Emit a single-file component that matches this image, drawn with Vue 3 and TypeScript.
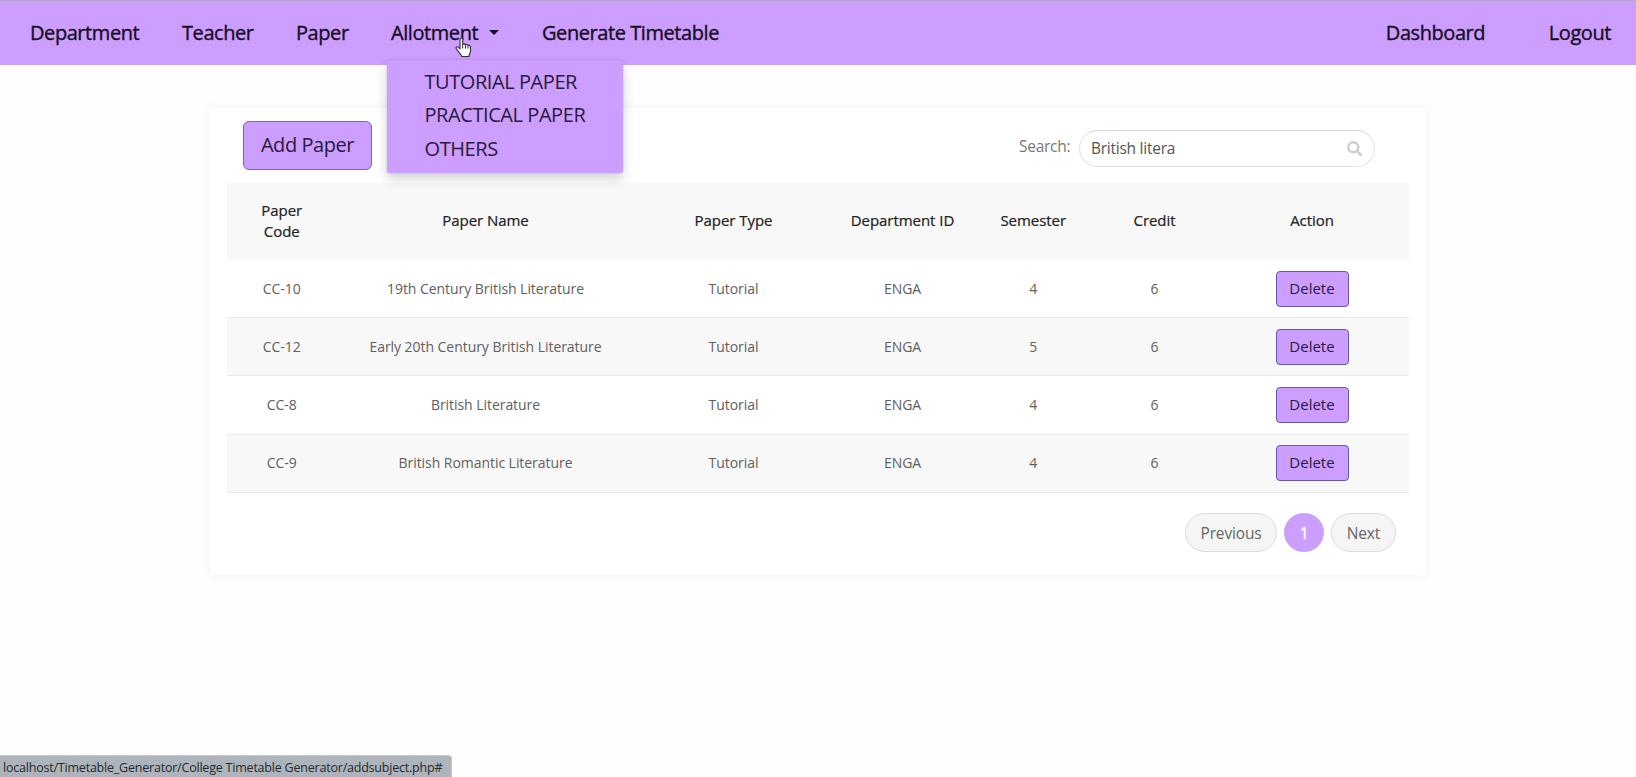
<script setup lang="ts">
import { ref } from 'vue'

interface Paper {
  code: string
  name: string
  type: string
  department: string
  semester: number
  credit: number
}

const query = ref('British litera')
const menu: string[] = ['TUTORIAL PAPER', 'PRACTICAL PAPER', 'OTHERS']
const columns: string[] = ['Paper Code', 'Paper Name', 'Paper Type', 'Department ID', 'Semester', 'Credit', 'Action']
const papers: Paper[] = [
  { code: 'CC-10', name: '19th Century British Literature', type: 'Tutorial', department: 'ENGA', semester: 4, credit: 6 },
  { code: 'CC-12', name: 'Early 20th Century British Literature', type: 'Tutorial', department: 'ENGA', semester: 5, credit: 6 },
  { code: 'CC-8', name: 'British Literature', type: 'Tutorial', department: 'ENGA', semester: 4, credit: 6 },
  { code: 'CC-9', name: 'British Romantic Literature', type: 'Tutorial', department: 'ENGA', semester: 4, credit: 6 },
]
</script>

<template>
  <div class="page">
    <nav class="navbar">
      <div class="links">
        <a class="link department">Department</a>
        <a class="link teacher">Teacher</a>
        <a class="link paper">Paper</a>
        <div class="dropdown">
          <a class="link allotment">Allotment<span class="caret"></span></a>
          <svg class="pointer" width="17" height="22" viewBox="0 0 17 22">
            <path
              d="M5 11.8V2.4C5 .6 7.7.6 7.7 2.4v5.2c.4-1.2 2.5-1 2.7.5.5-1.1 2.4-.9 2.6.6.6-.8 2.5-.5 2.5 1.2v4.3c0 2-1.4 3-1.6 5.3H6.6c-.3-2-2.4-3.3-3.3-5.2L1.1 11.6c-.7-1.6 1.2-2.5 2.3-1.3z"
              fill="#fff" stroke="#332b3c" stroke-width="1.1" stroke-linejoin="round" />
            <path d="M7.7 7.5v4M10.4 8.3v3.2M13 9v2.7" stroke="#332b3c" stroke-width="1" fill="none" />
          </svg>
          <div class="menu">
            <a v-for="item in menu" :key="item">{{ item }}</a>
          </div>
        </div>
        <a class="link generate">Generate Timetable</a>
      </div>
      <div class="account">
        <a class="link dashboard">Dashboard</a>
        <a class="link logout">Logout</a>
      </div>
    </nav>

    <main class="card">
      <div class="toolbar">
        <button class="add" type="button">Add Paper</button>
        <div class="search">
          <label for="search">Search:</label>
          <div class="field">
            <input id="search" v-model="query" type="text" />
            <svg width="15" height="15" viewBox="0 0 15 15" fill="none" stroke="#cdcdcd">
              <circle cx="6.3" cy="6.3" r="5" stroke-width="2.4" />
              <path d="M10 10l3.800 3.800" stroke-width="2.6" stroke-linecap="round" />
            </svg>
          </div>
        </div>
      </div>

      <div class="table">
        <div class="row head">
          <span v-for="column in columns" :key="column" :class="{ narrow: column === 'Paper Code' }">{{ column }}</span>
        </div>
        <div v-for="paper in papers" :key="paper.code" class="row">
          <span>{{ paper.code }}</span>
          <span>{{ paper.name }}</span>
          <span>{{ paper.type }}</span>
          <span>{{ paper.department }}</span>
          <span>{{ paper.semester }}</span>
          <span>{{ paper.credit }}</span>
          <span><button class="delete" type="button">Delete</button></span>
        </div>
      </div>

      <div class="pagination">
        <button class="previous" type="button">Previous</button>
        <button class="current" type="button">1</button>
        <button class="next" type="button">Next</button>
      </div>
    </main>

    <div class="status">localhost/Timetable_Generator/College Timetable Generator/addsubject.php#</div>
  </div>
</template>

<style>
body {
  margin: 0;
  background: #fff;
}
</style>

<style scoped>
.page {
  position: relative;
  height: 777px;
  overflow: hidden;
  display: flex;
  flex-direction: column;
  background: #fefefe;
  font-family: 'Open Sans', 'Noto Sans', sans-serif;
}
.page * {
  box-sizing: border-box;
}
button,
input {
  font-family: inherit;
  padding: 0;
  margin: 0;
}
.navbar {
  flex: none;
  height: 65px;
  display: flex;
  justify-content: space-between;
  align-items: center;
  padding: 0 25px 0 30px;
  background: #cc9eff;
  border-top: 1px solid #b7a3d0;
  border-bottom: 1px solid #c9a4f2;
}
.links,
.account {
  display: flex;
  align-items: center;
}
.link {
  display: flex;
  align-items: center;
  font-size: 20px;
  letter-spacing: -0.43px;
  -webkit-text-stroke: 0.35px #160c20;
  line-height: 28px;
  color: #160c20;
  white-space: nowrap;
}
.department { width: 152px; }
.teacher { width: 114px; }
.paper { width: 95px; }
.allotment { width: 151px; }
.dashboard { width: 163px; }
.caret {
  margin-left: 11px;
  border: 5px solid transparent;
  border-top-color: #160c20;
  border-bottom: 0;
}
.dropdown {
  position: relative;
}
.pointer {
  position: absolute;
  left: 64px;
  top: 18px;
  z-index: 3;
}
.menu {
  position: absolute;
  left: -4px;
  top: 41px;
  z-index: 2;
  width: 236px;
  height: 113px;
  padding: 5px 0 0 37.5px;
  background: #cc9eff;
  border-radius: 3px;
  box-shadow: 0 6px 12px rgba(0, 0, 0, 0.18), 0 0 2px rgba(0, 0, 0, 0.2);
}
.menu a {
  display: block;
  height: 33.7px;
  line-height: 33.7px;
  font-size: 20px;
  letter-spacing: -0.43px;
  color: #2a1a3a;
  white-space: nowrap;
}
.card {
  flex: none;
  width: 1216px;
  height: 467px;
  margin: 43px 0 0 210px;
  padding: 13px 17px 0;
  background: #fff;
  box-shadow: 0 0 10px rgba(0, 0, 0, 0.06);
}
.toolbar {
  height: 62px;
  display: flex;
  justify-content: space-between;
  align-items: flex-start;
  padding: 0 34px 0 16px;
}
.add {
  width: 129px;
  height: 49px;
  padding-bottom: 2px;
  border: 1px solid #7468b2;
  border-radius: 6px;
  background: #cc9eff;
  color: #2a1a3a;
  font-size: 20px;
  letter-spacing: -0.43px;
}
.search {
  display: flex;
  margin-top: 9px;
}
.search label {
  width: 60px;
  margin-top: 5px;
  line-height: 22px;
  font-size: 15.5px;
  letter-spacing: -0.28px;
  color: #777;
}
.field {
  display: flex;
  align-items: center;
  width: 296px;
  height: 37px;
  padding: 0 12px 1px 11px;
  border: 1px solid #e2e2e2;
  border-top-color: #d8d8d8;
  border-radius: 19px;
  background: #fff;
}
.field input {
  flex: 1;
  min-width: 0;
  border: 0;
  outline: 0;
  background: none;
  font-size: 15.5px;
  letter-spacing: -0.25px;
  color: #555;
}
.row {
  display: grid;
  grid-template-columns: 109.5px 298px 198px 140px 121.5px 121px 194px;
  align-items: center;
  height: 58.2px;
  border-bottom: 1px solid #ebebeb;
  font-size: 14px;
  letter-spacing: -0.05px;
  color: #606060;
  text-align: center;
}
.row span {
  white-space: nowrap;
}
.row:not(.head) > span {
  padding-bottom: 1px;
}
.row:nth-child(odd) {
  background: #f8f8f8;
}
.head {
  height: 77px;
  padding-bottom: 2px;
  border-bottom: 0;
  font-size: 15px;
  letter-spacing: -0.05px;
  -webkit-text-stroke: 0.22px #222;
  line-height: 21px;
  color: #222;
}
.head .narrow {
  white-space: normal;
  padding: 0 25px;
}
.delete {
  display: block;
  width: 73px;
  height: 36px;
  margin: 1px auto 0;
  padding-bottom: 2px;
  border: 1px solid #6458a8;
  border-radius: 4px;
  background: #cc9eff;
  color: #2a1a3a;
  font-size: 15px;
}
.pagination {
  display: flex;
  justify-content: flex-end;
  gap: 7px;
  padding: 20px 13px 0 0;
}
.pagination button {
  height: 39px;
  padding-top: 1px;
  border: 1px solid #dcdcdc;
  border-radius: 20px;
  background: #f5f5f5;
  color: #666;
  font-size: 15.5px;
  letter-spacing: -0.15px;
}
.pagination .previous { width: 92px; }
.pagination .next { width: 65px; }
.pagination .current {
  width: 40px;
  border-color: #cc9eff;
  background: #cc9eff;
  color: #fff;
  -webkit-text-stroke: 0.4px #fff;
}
.status {
  position: absolute;
  left: 0;
  bottom: 0;
  width: 452px;
  height: 22px;
  padding-left: 3px;
  border-top: 1px solid #c4c9ce;
  border-right: 1px solid #c4c9ce;
  border-radius: 0 4px 0 0;
  background: #adb4bc;
  color: #252a2e;
  font-size: 12.5px;
  letter-spacing: -0.21px;
  line-height: 24px;
  white-space: nowrap;
}
</style>
